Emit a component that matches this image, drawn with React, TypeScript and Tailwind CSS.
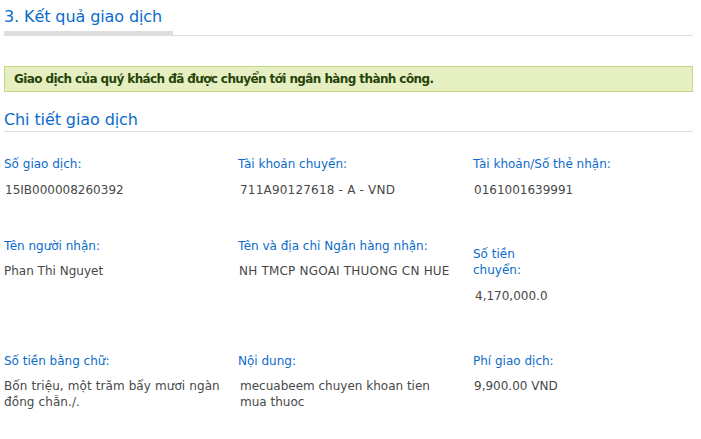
import React from "react";

const Label = ({ children, className = "" }: { children: React.ReactNode; className?: string }) => (
  <div className={"text-[12px] leading-[16px] text-[#0b6bcb] " + className}>{children}</div>
);
const Value = ({ children, className = "" }: { children: React.ReactNode; className?: string }) => (
  <div className={"text-[12px] leading-[16px] text-[#484848] " + className}>{children}</div>
);

export default function App() {
  return (
    <div className="w-[701px] h-[439px] bg-white overflow-hidden pl-[4px] pr-[8px]" style={{ fontFamily: '"DejaVu Sans", sans-serif' }}>
      <div className="flex items-end pt-[6px]">
        <div className="w-[169px] border-b-[5px] border-[#dedede] pb-[3px] text-[16px] leading-[22px] text-[#0b6bcb] tracking-[-0.1px] whitespace-nowrap">
          3. Kết quả giao dịch
        </div>
        <div className="flex-1 border-b border-[#dedede]" />
      </div>

      <div className="mt-[30px] h-[26px] border border-[#c6d880] bg-[#e6efc2] pl-[9px] text-[12px] leading-[24px] font-bold text-[#264409] tracking-[-0.6px] whitespace-nowrap">
        Giao dịch của quý khách đã được chuyển tới ngân hàng thành công.
      </div>

      <div className="mt-[17px] border-b border-[#dedede] text-[16px] leading-[22px] text-[#0b6bcb] tracking-[-0.1px]">
        Chi tiết giao dịch
      </div>

      <div className="grid grid-cols-[234px_235px_1fr] mt-[24px]">
        <div className="h-[82px]">
          <Label>Số giao dịch:</Label>
          <Value className="mt-[10px] pl-[1px]">15IB000008260392</Value>
        </div>
        <div>
          <Label>Tài khoản chuyển:</Label>
          <Value className="mt-[10px] pl-[2px] tracking-[0.2px]">711A90127618 - A - VND</Value>
        </div>
        <div>
          <Label>Tài khoản/Số thẻ nhận:</Label>
          <Value className="mt-[10px] pl-[1px]">0161001639991</Value>
        </div>

        <div className="h-[115px]">
          <Label>Tên người nhận:</Label>
          <Value className="mt-[9px]">Phan Thi Nguyet</Value>
        </div>
        <div>
          <Label>Tên và địa chỉ Ngân hàng nhận:</Label>
          <Value className="mt-[9px] pl-[1px] tracking-[0.2px]">NH TMCP NGOAI THUONG CN HUE</Value>
        </div>
        <div className="w-[75px] overflow-hidden pt-[8px]">
          <Label>Số tiền chuyển:</Label>
          <Value className="mt-[10px] pl-[2px] whitespace-nowrap">4,170,000.00 VND</Value>
        </div>

        <div>
          <Label>Số tiền bằng chữ:</Label>
          <Value className="mt-[9px] w-[226px] tracking-[0.1px]">Bốn triệu, một trăm bẩy mươi ngàn đồng chẵn./.</Value>
        </div>
        <div>
          <Label>Nội dung:</Label>
          <Value className="mt-[9px] pl-[2px] w-[215px]">mecuabeem chuyen khoan tien mua thuoc</Value>
        </div>
        <div>
          <Label>Phí giao dịch:</Label>
          <Value className="mt-[9px] pl-[1px]">9,900.00 VND</Value>
        </div>
      </div>
    </div>
  );
}
